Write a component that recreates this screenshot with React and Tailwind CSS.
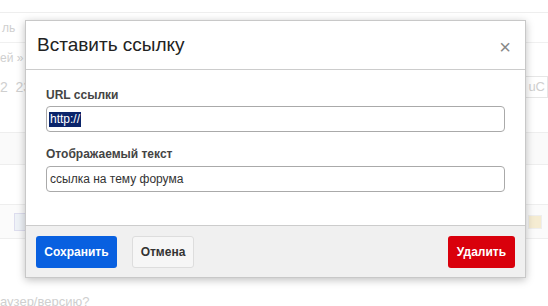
export default function App() {
  return (
    <div className="relative w-[548px] h-[306px] overflow-hidden bg-white font-['Liberation_Sans',Arial,sans-serif] text-[#333]">
      {/* faded page behind the dialog */}
      <div className="flex flex-col text-[12px] text-[#cfcfcf]">
        <div className="h-[13px] border-b border-[#eee]" />
        <div className="h-[30px] flex items-center pl-[2px] border-b border-[#f0f0f0]">ль</div>
        <div className="h-[26px] flex items-center pl-0 mt-[2px]">ей » Г</div>
        <div className="h-[32px] flex items-center justify-between pr-0">
          <span className="text-[14px]">2&nbsp;&nbsp;23</span>
          <span className="border border-[#e6e6e6] px-[2px] text-[13px]">uC</span>
        </div>
        <div className="h-[30px] border-b border-[#eee]" />
        <div className="h-[32px] border-b border-[#eee] bg-[#fafafa]" />
        <div className="h-[40px] border-b border-[#eee]" />
        <div className="h-[34px] flex items-center justify-between border-b border-[#eee] bg-[#fbfbfb]">
          <span className="w-[18px] h-[18px] ml-[14px] border border-[#dde] bg-[#eef2f7]" />
          <span className="w-[14px] h-[14px] mr-[6px] bg-[#f5ecd2] border border-[#eee]" />
        </div>
        <div className="h-[56px]" />
        <div className="text-[13px] pl-0 leading-none">аузер/версию?</div>
      </div>

      {/* dialog */}
      <div className="absolute left-[25px] top-[20px] w-[501px] h-[258px] bg-white border border-[#c8c8c8] shadow-[0_2px_8px_rgba(0,0,0,0.25)] flex flex-col">
        <div className="h-[49px] shrink-0 flex items-center justify-between pl-[11px] pr-[14px] border-b border-[#ccc]">
          <span className="text-[19px] text-[#222] mt-[1px]">Вставить ссылку</span>
          <span className="text-[20px] text-[#888] leading-none mt-[4px]">×</span>
        </div>
        <div className="flex-1 px-[20px] pt-[18px]">
          <div className="text-[12px] font-bold text-[#444] leading-[14px]">URL ссылки</div>
          <div className="mt-[4px] h-[26px] border border-[#aaa] rounded-[4px] flex items-center px-[2px] text-[12px]">
            <span className="bg-[#0a246a] text-white leading-[15px] px-[1px]">http://</span>
          </div>
          <div className="mt-[15px] text-[12px] font-bold text-[#444] leading-[14px]">Отображаемый текст</div>
          <div className="mt-[5px] h-[26px] border border-[#aaa] rounded-[4px] flex items-center px-[3px] text-[12px] text-[#333]">
            ссылка на тему форума
          </div>
        </div>
        <div className="h-[52px] shrink-0 bg-[#f0f0f0] border-t border-[#ccc] flex items-center justify-between px-[10px] text-[12px] font-bold">
          <div className="flex gap-[15px]">
            <button className="w-[81px] h-[32px] rounded-[3px] bg-[#0860e0] text-white">Сохранить</button>
            <button className="w-[62px] h-[32px] rounded-[3px] bg-[#f6f6f6] border border-[#ddd] text-[#333]">Отмена</button>
          </div>
          <button className="w-[67px] h-[32px] rounded-[3px] bg-[#d9000c] text-white">Удалить</button>
        </div>
      </div>
    </div>
  );
}
